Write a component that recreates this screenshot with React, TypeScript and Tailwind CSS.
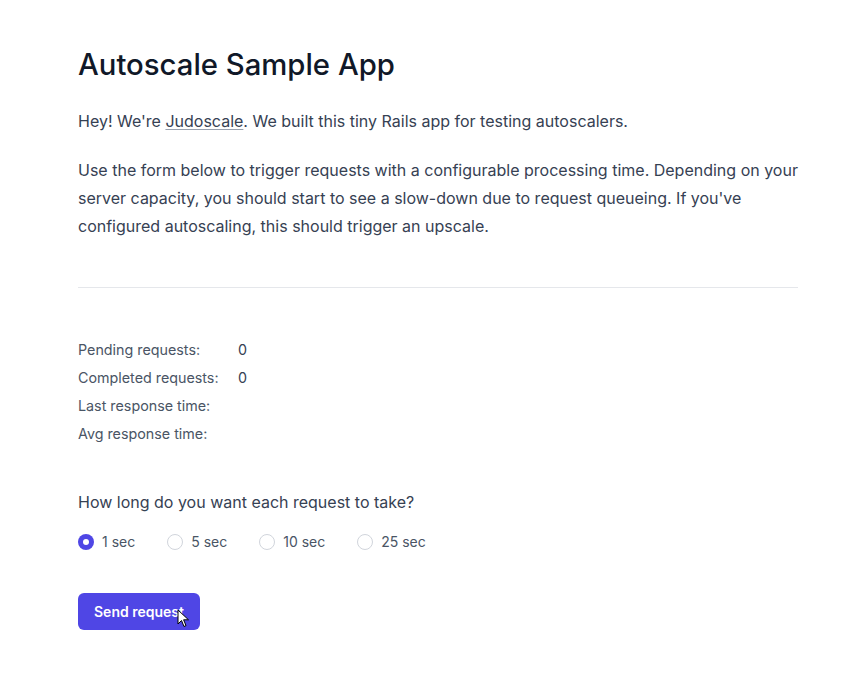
import React from "react";

function Radio({ label, checked }: { label: string; checked?: boolean }) {
  return (
    <label className="flex items-center gap-2">
      {checked ? (
        <span className="flex h-4 w-4 items-center justify-center rounded-full bg-[#4f46e5]">
          <span className="h-1.5 w-1.5 rounded-full bg-white" />
        </span>
      ) : (
        <span className="h-4 w-4 rounded-full border border-gray-300 bg-white" />
      )}
      <span className="text-sm text-gray-600">{label}</span>
    </label>
  );
}

export default function App() {
  return (
    <div className="min-h-[690px] bg-white" style={{ fontFamily: "Inter, 'Noto Sans', sans-serif" }}>
      <div className="ml-[78px] w-[720px] pt-[47px]">
        <h1 className="text-[29.3px] leading-9 font-medium text-gray-900">Autoscale Sample App</h1>
        <p className="mt-6 text-base leading-7 text-gray-700">
          Hey! We're <a className="underline decoration-gray-400 underline-offset-2">Judoscale</a>. We built this tiny Rails app for testing autoscalers.
        </p>
        <p className="mt-[21px] text-base leading-7 text-gray-700">
          Use the form below to trigger requests with a configurable processing time. Depending on your server capacity, you should start to see a slow-down due to request queueing. If you've configured autoscaling, this should trigger an upscale.
        </p>
        <hr className="mt-[47px] border-gray-200" />
        <div className="mt-[48px] text-[14.3px] text-gray-600">
          <div className="flex h-7 items-center"><span className="w-[160px]">Pending requests:</span><span className="text-gray-700">0</span></div>
          <div className="flex h-7 items-center"><span className="w-[160px]">Completed requests:</span><span className="text-gray-700">0</span></div>
          <div className="flex h-7 items-center"><span className="w-[160px]">Last response time:</span><span></span></div>
          <div className="flex h-7 items-center"><span className="w-[160px]">Avg response time:</span><span></span></div>
        </div>
        <p className="mt-[42px] text-base leading-6 text-gray-700">How long do you want each request to take?</p>
        <div className="mt-4 flex h-6 items-center gap-8">
          <Radio label="1 sec" checked />
          <Radio label="5 sec" />
          <Radio label="10 sec" />
          <Radio label="25 sec" />
        </div>
        <div className="relative mt-[39px] inline-block">
          <button className="h-[37px] w-[122px] rounded-md bg-[#4f46e5] text-sm font-semibold text-white">Send request</button>
          <svg className="absolute left-[99px] top-[16px]" width="13" height="19" viewBox="0 0 13 19">
            <path d="M1 1 L1 15 L4.5 11.5 L7 17.5 L9 16.6 L6.6 10.8 L11.5 10.8 Z" fill="white" stroke="black" strokeWidth="1" strokeLinejoin="round" />
          </svg>
        </div>
      </div>
    </div>
  );
}
